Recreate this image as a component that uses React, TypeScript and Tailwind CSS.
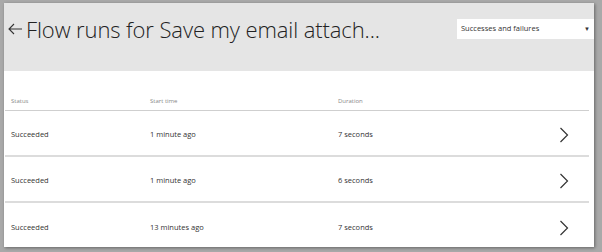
import React from "react";

const runs = [
	{ status: "Succeeded", start: "1 minute ago", duration: "7 seconds" },
	{ status: "Succeeded", start: "1 minute ago", duration: "6 seconds" },
	{ status: "Succeeded", start: "13 minutes ago", duration: "7 seconds" },
];

function Chevron() {
	return (
		<svg width="10" height="16" viewBox="0 0 10 16" className="text-[#333]">
			<polyline points="1.5,1 8.5,8 1.5,15" fill="none" stroke="currentColor" strokeWidth="1.2" />
		</svg>
	);
}

export default function App() {
	return (
		<div className="w-[602px] h-[252px] bg-[#a9a9a9] pl-[4px] pt-[3px] pr-[8px] pb-[5px] font-['Open_Sans',sans-serif]">
			<div className="w-full h-full bg-white flex flex-col overflow-hidden shadow-[1px_1px_3px_rgba(0,0,0,0.4)]">
				<div className="h-[68px] shrink-0 bg-[#e5e5e5] flex justify-between items-start pl-[3px]">
					<div className="flex items-center pt-[15px] gap-[3px]">
						<svg width="16" height="14" viewBox="0 0 16 14" className="text-[#333]">
							<path d="M15 7 H2 M7 2 L2 7 L7 12" fill="none" stroke="currentColor" strokeWidth="1.1" />
						</svg>
						<h1 className="text-[22px] font-light text-[#222] leading-none tracking-[-0.1px]">
							Flow runs for Save my email attach...
						</h1>
					</div>
					<div className="mt-[16px] w-[137px] h-[20px] bg-white flex items-center justify-between pl-[4px] pr-[4px] text-[7.5px] text-[#333]">
						<span>Successes and failures</span>
						<span className="text-[6px]">▼</span>
					</div>
				</div>
				<div className="px-[1px] pt-[24px] shrink-0">
					<div className="grid grid-cols-[139px_188px_1fr] h-[16px] pt-[2px] text-[6px] text-[#888] pl-[6px] border-b border-[#cfcfcf] mr-[4px]">
						<span>Status</span>
						<span>Start time</span>
						<span>Duration</span>
					</div>
					{runs.map((r, i) => (
						<div
							key={i}
							className={`grid grid-cols-[139px_188px_1fr_auto] items-center h-[46px] pt-[3px] text-[7.5px] text-[#333] pl-[6px] pr-[20px] mr-[4px] ${i < runs.length - 1 ? "border-b-2 border-[#dcdcdc]" : ""}`}
						>
							<span>{r.status}</span>
							<span>{r.start}</span>
							<span>{r.duration}</span>
							<Chevron />
						</div>
					))}
				</div>
			</div>
		</div>
	);
}
